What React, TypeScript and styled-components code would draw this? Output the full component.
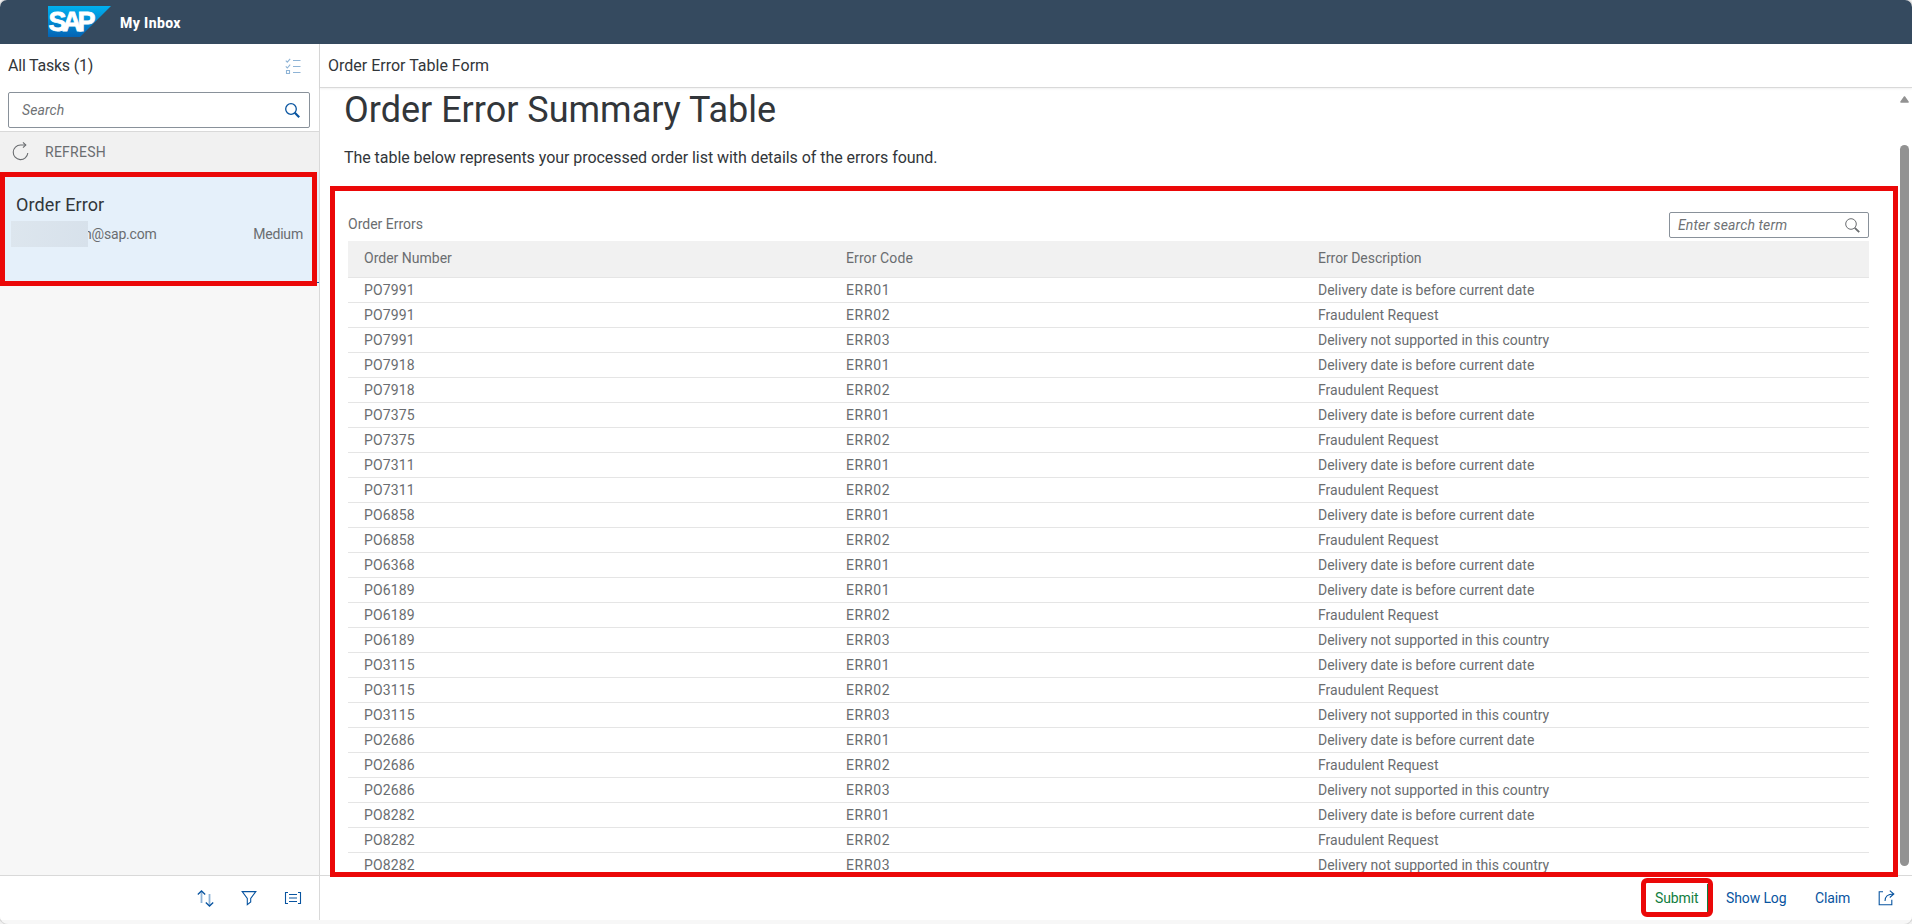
import React from 'react';
import styled, { createGlobalStyle } from 'styled-components';

const GlobalStyle = createGlobalStyle`
  * { box-sizing: border-box; }
  body {
    margin: 0;
    background: #f7f7f7;
    font-family: Roboto, "Liberation Sans", sans-serif;
    font-size: 14px;
    color: #32363a;
    overflow: hidden;
  }
`;

const Shell = styled.div`
  display: flex;
  flex-direction: column;
  width: 1912px;
  height: 924px;
  border-radius: 7px 7px 8px 8px;
  overflow: hidden;
  background: #f7f7f7;
  padding-bottom: 4px;
  box-shadow: 0 0 0 1px #d8d8d8, 0 0 0 12px #f1f1f1;
`;

const ShellBar = styled.header`
  display: flex;
  align-items: center;
  flex: none;
  height: 44px;
  padding: 0 0 1px 48px;
  gap: 9px;
  background: #354a5f;
  color: #fff;
`;

const AppTitle = styled.span`
  font-weight: 800;
  font-size: 14px;
  letter-spacing: 0.4px;
  padding-top: 2px;
`;

const Split = styled.div`
  display: flex;
  flex: 1;
  min-height: 0;
`;

const Master = styled.aside`
  display: flex;
  flex-direction: column;
  flex: none;
  width: 320px;
  background: #f7f7f7;
  border-right: 1px solid #d9d9d9;
`;

const MasterHeader = styled.div`
  display: flex;
  flex: none;
  align-items: center;
  justify-content: space-between;
  height: 44px;
  padding: 0 18px 0 8px;
  background: #fff;
  font-size: 16px;
  letter-spacing: -0.22px;
`;

const MasterTitle = styled.span`
  padding-bottom: 2px;
`;

const SearchBar = styled.div`
  flex: none;
  height: 44px;
  padding: 4px 9px 0 8px;
  background: #fff;
  border-bottom: 1px solid #d9d9d9;
`;

const SearchField = styled.div<{ $compact?: boolean }>`
  display: flex;
  align-items: center;
  justify-content: space-between;
  width: ${(p) => (p.$compact ? '200px' : 'auto')};
  height: ${(p) => (p.$compact ? '26px' : '36px')};
  padding: ${(p) => (p.$compact ? '0 8px 0 8px' : '0 9px 0 13px')};
  border: 1px solid #89919a;
  border-radius: 2px;
  background: #fff;
`;

const Placeholder = styled.span`
  font-style: italic;
  color: #6f7275;
  letter-spacing: 0.12px;
`;

const RefreshRow = styled.div`
  display: flex;
  flex: none;
  align-items: center;
  height: 40px;
  padding: 0 0 1px 12px;
  gap: 16px;
  background: #f1f1f1;
  color: #6a6d70;
  letter-spacing: 0.25px;
`;

const TaskItem = styled.div`
  position: relative;
  flex: none;
  height: 111px;
  padding: 22px 16px 0 16px;
  background: #e5f0fa;
  border-bottom: 1px solid #0854a0;
`;

const TaskTitle = styled.div`
  font-size: 18px;
  line-height: 22px;
  letter-spacing: 0.1px;
`;

const TaskMeta = styled.div`
  display: flex;
  justify-content: space-between;
  height: 26px;
  margin: 5px 0 0 -5px;
  line-height: 27px;
  color: #6a6d70;
  letter-spacing: -0.18px;
`;

const Sender = styled.span`
  display: flex;
`;

const Redaction = styled.span`
  width: 77px;
  height: 26px;
  background: linear-gradient(100deg, #dde6ee, #d7e1eb);
  z-index: 1;
`;

const Address = styled.span`
  margin-left: -4px;
`;

const Callout = styled.div<{ $rounded?: boolean }>`
  position: absolute;
  border: 5px solid #eb0808;
  border-radius: ${(p) => (p.$rounded ? '6px' : '0')};
  pointer-events: none;
  z-index: 2;
`;

const TaskCallout = styled(Callout)`
  top: 0;
  left: 0;
  width: 317px;
  height: 114px;
`;

const TableCallout = styled(Callout)`
  top: 142px;
  left: 10px;
  width: 1568px;
  height: 691px;
`;

const SubmitCallout = styled(Callout)`
  top: -20px;
  left: -14px;
  width: 72px;
  height: 39px;
`;

const Spacer = styled.div`
  flex: 1;
`;

const MasterFooter = styled.footer`
  display: flex;
  flex: none;
  align-items: center;
  justify-content: flex-end;
  height: 45px;
  padding: 0 17px 0 0;
  gap: 27px;
  background: #fff;
  border-top: 1px solid #d9d9d9;
`;

const Detail = styled.main`
  position: relative;
  display: flex;
  flex-direction: column;
  flex: 1;
  min-width: 0;
  background: #fff;
`;

const DetailHeader = styled.div`
  display: flex;
  flex: none;
  align-items: center;
  height: 44px;
  padding-left: 8px;
  border-bottom: 1px solid #d9d9d9;
  box-shadow: 0 1px 2px rgba(0, 0, 0, 0.06);
  font-size: 16px;
`;

const DetailBody = styled.div`
  display: flex;
  flex: 1;
  min-height: 0;
  overflow: hidden;
`;

const FormContent = styled.div`
  flex: 1;
  padding: 0 31px 0 28px;
`;

const Heading = styled.h1`
  margin: 0 0 0 -4px;
  padding-top: 1px;
  font-size: 36px;
  font-weight: 400;
  line-height: 42px;
`;

const Intro = styled.p`
  margin: 17px 0 0 -4px;
  font-size: 16px;
  line-height: 20px;
  letter-spacing: -0.05px;
`;

const TableToolbar = styled.div`
  display: flex;
  align-items: center;
  justify-content: space-between;
  height: 26px;
  margin: 44px 0 3px;
  color: #6a6d70;
`;

const TableTitle = styled.span`
  padding-bottom: 2px;
`;

const TableGrid = styled.div<{ $head?: boolean }>`
  display: grid;
  grid-template-columns: 482px 472px 1fr;
  align-items: center;
  height: ${(p) => (p.$head ? '37px' : '25px')};
  padding: ${(p) => (p.$head ? '0 0 2px 16px' : '0 0 0 16px')};
  border-bottom: 1px solid #e5e5e5;
  background: ${(p) => (p.$head ? '#f1f1f1' : '#fff')};
  color: #6a6d70;
`;

const Cell = styled.span<{ $spacing?: number }>`
  letter-spacing: ${(p) => p.$spacing ?? 0}px;
`;

const ScrollTrack = styled.div`
  display: flex;
  flex: none;
  flex-direction: column;
  width: 12px;
  padding-top: 8px;
`;

const ScrollThumb = styled.div`
  width: 9px;
  height: 721px;
  margin-top: 42px;
  border-radius: 5px;
  background: #929292;
`;

const DetailFooter = styled.footer`
  display: flex;
  flex: none;
  align-items: center;
  justify-content: flex-end;
  height: 45px;
  padding-right: 17px;
  border-top: 1px solid #d9d9d9;
  color: #0854a0;
`;

const FooterAction = styled.span<{ $positive?: boolean; $width: number }>`
  position: relative;
  width: ${(p) => p.$width}px;
  height: 0;
  line-height: 0;
  letter-spacing: -0.12px;
  color: ${(p) => (p.$positive ? '#107e3e' : '#0854a0')};
`;

const ActionEdge = styled.span`
  position: absolute;
  top: -14px;
  left: 52px;
  width: 1px;
  height: 28px;
  background: #107e3e;
`;

const SapLogo = () => (
  <svg width="63" height="31" viewBox="0 0 63 31">
    <defs>
      <linearGradient id="sapBlue" x1="0" y1="0" x2="0" y2="1">
        <stop offset="0" stopColor="#00b1f0" />
        <stop offset="1" stopColor="#0463b4" />
      </linearGradient>
    </defs>
    <path d="M0 0H63L32 31H0Z" fill="url(#sapBlue)" />
    <text
      x="0.4"
      y="25.2"
      fill="#fff"
      stroke="#fff"
      strokeWidth="0.8"
      fontFamily="Liberation Sans, sans-serif"
      fontWeight="700"
      fontSize="27"
      textLength="47"
      lengthAdjust="spacing"
    >
      SAP
    </text>
  </svg>
);

const MultiSelectIcon = () => (
  <svg width="16" height="16" viewBox="0 0 16 16" fill="none" stroke="#8fb4d6" strokeWidth="1.1">
    <path d="M.8 2.6 2.3 4.2 5.2.8M.8 8.4 2.3 10 5.2 6.6M1.5 12.5h3v3h-3zM8 2.5h7.5M8 8.5h7.5M8 14.5h7.5" />
  </svg>
);

const SearchIcon = ({ color, weight }: { color: string; weight: number }) => (
  <svg width="15" height="15" viewBox="0 0 15 15" fill="none" stroke={color}>
    <circle cx="6" cy="6" r="5.3" strokeWidth={weight} />
    <path d="M9.8 9.8 14.2 14.2" strokeWidth={weight + 0.9} />
  </svg>
);

const RefreshIcon = () => (
  <svg width="17" height="19" viewBox="0 0 17 19" fill="none" stroke="#6a6d70" strokeWidth="1.1">
    <path d="M13.6 3H8.5a7.3 7.3 0 1 0 7.3 8" />
    <path d="M11 .4 13.8 3 11 5.6" />
  </svg>
);

const SortIcon = () => (
  <svg width="17" height="17" viewBox="0 0 17 17" fill="none" stroke="#0854a0">
    <path d="M4.5 1.5V13M12.5 4v11.5" stroke="#8fb3d6" strokeWidth="1.8" />
    <path d="M.8 4.4 4.5 1l3.7 3.4M8.8 12.6l3.7 3.4 3.7-3.4" strokeWidth="1.3" />
  </svg>
);

const FilterIcon = () => (
  <svg width="16" height="16" viewBox="0 0 16 16" fill="none" stroke="#0854a0" strokeWidth="1.1">
    <path d="M1.2 1.6h13.6L9.7 8.4v3.6L6.3 14.7V8.4Z" />
  </svg>
);

const GroupIcon = () => (
  <svg width="18" height="14" viewBox="0 0 18 14" fill="none" stroke="#0854a0" strokeWidth="1.1">
    <path d="M4 1.5H1.5v11H4M14 1.5h2.5v11H14M5 3.5h8M5 7h8M5 10.5h8" />
  </svg>
);

const ShareIcon = () => (
  <svg width="17" height="16" viewBox="0 0 17 16" fill="none" stroke="#0854a0" strokeWidth="1.1">
    <path d="M5 1.8H1.2v12.9h12.6V9.8M7 11C7 6.5 9.5 4 15.5 4M11.8.7 15.8 4l-4 3.5" />
  </svg>
);

const ScrollUpIcon = () => (
  <svg width="9" height="7" viewBox="0 0 9 7">
    <path d="M4.5 1 8 6H1Z" fill="#929292" stroke="#929292" strokeWidth="1.6" strokeLinejoin="round" />
  </svg>
);

const DESCRIPTIONS: Record<string, string> = {
  ERR01: 'Delivery date is before current date',
  ERR02: 'Fraudulent Request',
  ERR03: 'Delivery not supported in this country',
};

const ORDERS: [string, string[]][] = [
  ['PO7991', ['ERR01', 'ERR02', 'ERR03']],
  ['PO7918', ['ERR01', 'ERR02']],
  ['PO7375', ['ERR01', 'ERR02']],
  ['PO7311', ['ERR01', 'ERR02']],
  ['PO6858', ['ERR01', 'ERR02']],
  ['PO6368', ['ERR01']],
  ['PO6189', ['ERR01', 'ERR02', 'ERR03']],
  ['PO3115', ['ERR01', 'ERR02', 'ERR03']],
  ['PO2686', ['ERR01', 'ERR02', 'ERR03']],
  ['PO8282', ['ERR01', 'ERR02', 'ERR03']],
];

export default function App() {
  return (
    <>
      <GlobalStyle />
      <Shell>
        <ShellBar>
          <SapLogo />
          <AppTitle>My Inbox</AppTitle>
        </ShellBar>
        <Split>
          <Master>
            <MasterHeader>
              <MasterTitle>All Tasks (1)</MasterTitle>
              <MultiSelectIcon />
            </MasterHeader>
            <SearchBar>
              <SearchField>
                <Placeholder>Search</Placeholder>
                <SearchIcon color="#0854a0" weight={1.3} />
              </SearchField>
            </SearchBar>
            <RefreshRow>
              <RefreshIcon />
              REFRESH
            </RefreshRow>
            <TaskItem>
              <TaskCallout />
              <TaskTitle>Order Error</TaskTitle>
              <TaskMeta>
                <Sender>
                  <Redaction />
                  <Address>n@sap.com</Address>
                </Sender>
                <span>Medium</span>
              </TaskMeta>
            </TaskItem>
            <Spacer />
            <MasterFooter>
              <SortIcon />
              <FilterIcon />
              <GroupIcon />
            </MasterFooter>
          </Master>
          <Detail>
            <DetailHeader>Order Error Table Form</DetailHeader>
            <DetailBody>
              <FormContent>
                <Heading>Order Error Summary Table</Heading>
                <Intro>
                  The table below represents your processed order list with details of the errors found.
                </Intro>
                <TableToolbar>
                  <TableTitle>Order Errors</TableTitle>
                  <SearchField $compact>
                    <Placeholder>Enter search term</Placeholder>
                    <SearchIcon color="#6a6d70" weight={1} />
                  </SearchField>
                </TableToolbar>
                <TableGrid $head>
                  <Cell>Order Number</Cell>
                  <Cell $spacing={0.1}>Error Code</Cell>
                  <Cell $spacing={-0.05}>Error Description</Cell>
                </TableGrid>
                {ORDERS.flatMap(([order, codes]) =>
                  codes.map((code) => (
                    <TableGrid key={order + code}>
                      <Cell $spacing={0.12}>{order}</Cell>
                      <Cell $spacing={0.65}>{code}</Cell>
                      <Cell>{DESCRIPTIONS[code]}</Cell>
                    </TableGrid>
                  )),
                )}
              </FormContent>
              <ScrollTrack>
                <ScrollUpIcon />
                <ScrollThumb />
              </ScrollTrack>
            </DetailBody>
            <TableCallout />
            <DetailFooter>
              <FooterAction $positive $width={71}>
                Submit
                <ActionEdge />
                <SubmitCallout $rounded />
              </FooterAction>
              <FooterAction $width={89}>Show Log</FooterAction>
              <FooterAction $width={63}>Claim</FooterAction>
              <ShareIcon />
            </DetailFooter>
          </Detail>
        </Split>
      </Shell>
    </>
  );
}
